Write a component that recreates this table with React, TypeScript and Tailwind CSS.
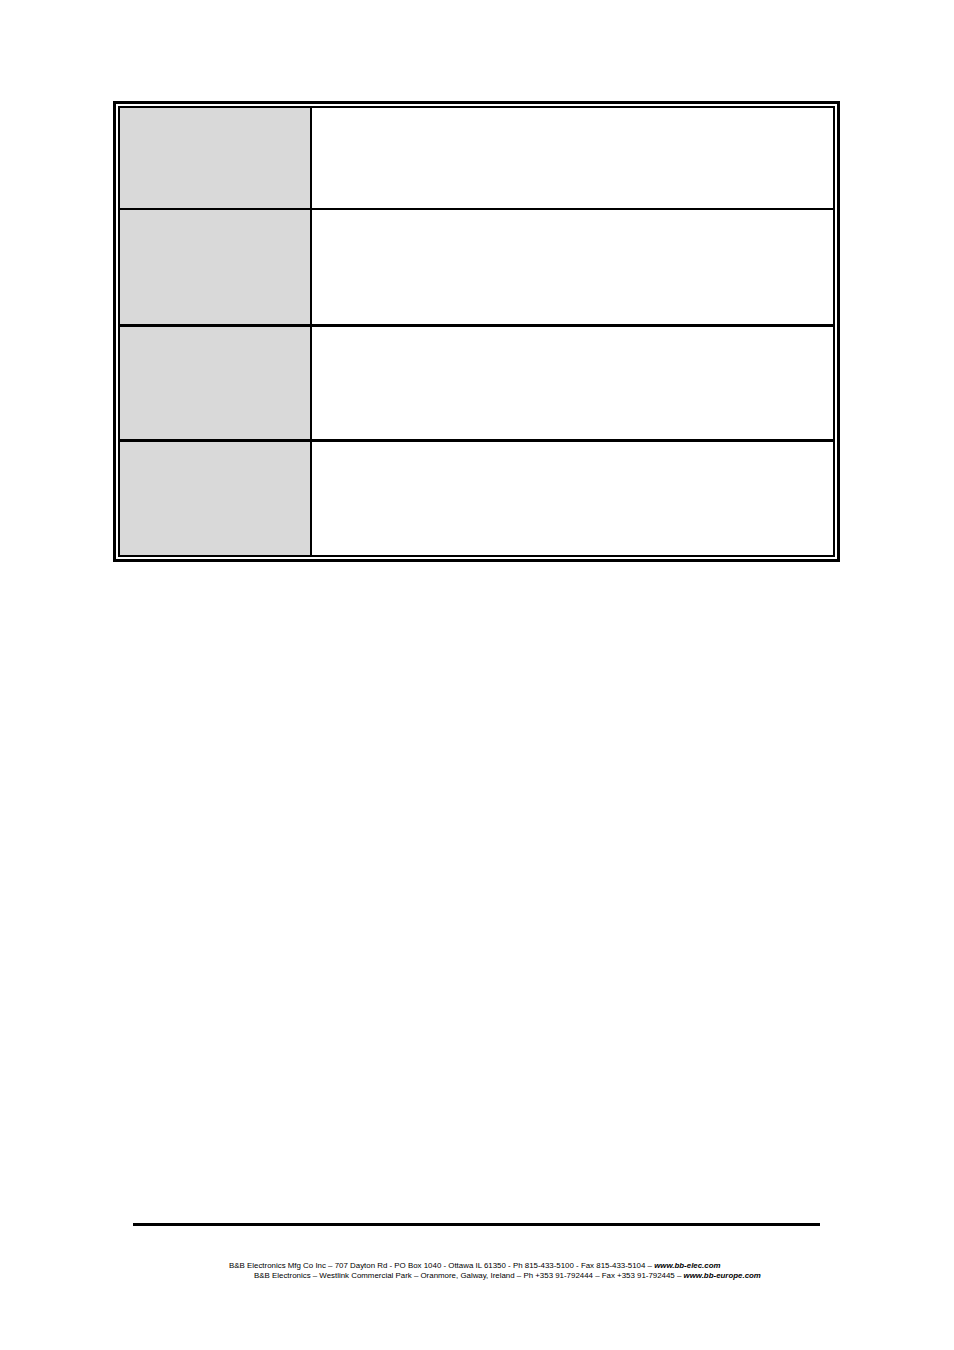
const rows = [
  { h: "h-[102px]", sep: "border-b-2" },
  { h: "h-[117px]", sep: "border-b-[3px]" },
  { h: "h-[115px]", sep: "border-b-[3px]" },
  { h: "h-[113px]", sep: "" },
]

const App = () => {
  return (
    <div className="w-[954px] h-[1350px] bg-white font-['Liberation_Sans',Arial,sans-serif] text-black">
      {/* Double-ruled table */}
      <div className="pt-[101px] pl-[113px]">
        <div className="w-[727px] border-[3px] border-black p-[2px]">
          <div className="border-2 border-black">
            {rows.map((row, i) => (
              <div key={i} className={`flex ${row.h} ${row.sep} border-black`}>
                <div className="w-[192px] bg-[#d9d9d9] border-r-2 border-black"></div>
                <div className="flex-1 bg-white"></div>
              </div>
            ))}
          </div>
        </div>
      </div>

      {/* Footer */}
      <div className="mt-[661px] ml-[133px] w-[687px] h-[3px] bg-black"></div>
      <div className="mt-[35px] text-[7.9px] leading-[10px] whitespace-nowrap">
        <div className="pl-[229px]">
          B&amp;B Electronics Mfg Co Inc – 707 Dayton Rd - PO Box 1040 - Ottawa IL 61350 - Ph 815-433-5100 - Fax 815-433-5104 – <b><i>www.bb-elec.com</i></b>
        </div>
        <div className="pl-[254px]">
          B&amp;B Electronics – Westlink Commercial Park – Oranmore, Galway, Ireland – Ph +353 91-792444 – Fax +353 91-792445 – <b><i>www.bb-europe.com</i></b>
        </div>
      </div>
    </div>
  )
}

export default App
